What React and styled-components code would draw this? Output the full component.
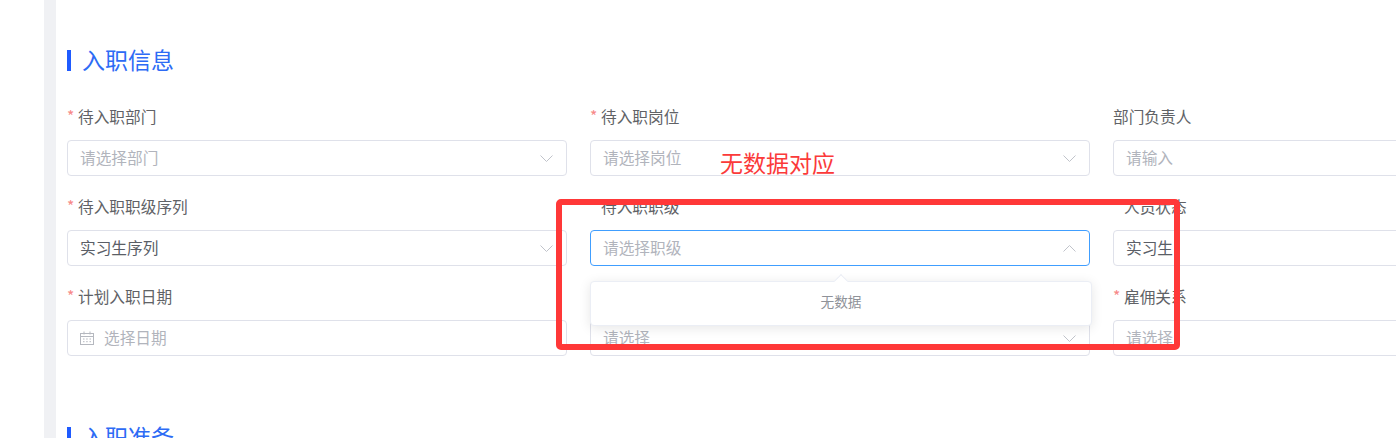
import styled, { createGlobalStyle } from "styled-components";

const GlobalStyle = createGlobalStyle`
  html, body {
    margin: 0;
    padding: 0;
    background: #fff;
    overflow: hidden;
  }
  body {
    font-family: "Noto Sans CJK SC", "Liberation Sans", sans-serif;
  }
`;

const Page = styled.div`
  position: relative;
  display: flex;
  width: 1396px;
  height: 438px;
  overflow: hidden;
`;
const Rail = styled.div`
  width: 44px;
  flex: none;
`;
const Gutter = styled.div`
  width: 12px;
  flex: none;
  background: #f0f1f4;
`;
const Content = styled.main`
  flex: 1;
  min-width: 0;
  padding: 44px 0 0 11px;
`;
const SectionTitle = styled.h2`
  display: flex;
  align-items: center;
  gap: 11px;
  height: 32px;
  margin: 0;
  font-size: 23px;
  font-weight: 400;
  line-height: 32px;
  color: #2d6bf5;
  & > span {
    margin-top: -3px;
  }
  &::before {
    content: "";
    width: 4px;
    height: 21px;
    background: #1f5bff;
  }
`;
const FormGrid = styled.div`
  display: grid;
  grid-template-columns: repeat(3, 500px);
  column-gap: 23px;
  margin-top: 24px;
  margin-bottom: 51px;
`;
const Field = styled.div`
  position: relative;
  height: 90px;
  padding-top: 8px;
  box-sizing: border-box;
`;
const Label = styled.div`
  display: flex;
  align-items: center;
  height: 20px;
  margin-bottom: 12px;
  font-size: 15.7px;
  line-height: 18px;
  color: #606266;
  & > span:last-child {
    margin-top: -3px;
  }
`;
const Star = styled.span`
  width: 11px;
  margin-top: -5px;
  font-size: 15.7px;
  color: #f78989;
`;
const Control = styled.div`
  display: flex;
  align-items: center;
  height: 36px;
  padding: 0 13px 0 12px;
  box-sizing: border-box;
  border: 1px solid ${(p) => (p.$active ? "#409eff" : "#dfe1ea")};
  border-radius: 4px;
  background: #fff;
  font-size: 15.7px;
  color: ${(p) => (p.$filled ? "#5a5e66" : "#b1b4bc")};
`;
const ControlText = styled.span`
  flex: 1;
  min-width: 0;
  margin-top: -2px;
`;
const DateIcon = styled.svg`
  width: 14px;
  height: 14px;
  margin-right: 10px;
  flex: none;
`;
const Chevron = styled.svg`
  width: 13px;
  height: 7px;
  flex: none;
  transform: ${(p) => (p.$up ? "rotate(180deg)" : "none")};
`;
const Dropdown = styled.div`
  position: absolute;
  z-index: 2;
  top: 91px;
  left: 0;
  width: 502px;
  height: 45px;
  padding-bottom: 5px;
  display: flex;
  align-items: center;
  justify-content: center;
  box-sizing: border-box;
  border: 1px solid #ebeef5;
  border-radius: 4px;
  background: #fff;
  box-shadow: 0 2px 12px rgba(0, 0, 0, 0.1);
  font-size: 13.7px;
  color: #8f9299;
  &::before {
    content: "";
    position: absolute;
    top: -6px;
    left: 245px;
    width: 9px;
    height: 9px;
    background: #fff;
    border-top: 1px solid #ebeef5;
    border-left: 1px solid #ebeef5;
    transform: rotate(45deg);
  }
`;
const Annotation = styled.div`
  position: absolute;
  z-index: 3;
  top: 145px;
  left: 720px;
  font-size: 23px;
  line-height: 34px;
  color: #fb3a3a;
`;
const Highlight = styled.div`
  position: absolute;
  z-index: 3;
  top: 199px;
  left: 556px;
  width: 624px;
  height: 151px;
  box-sizing: border-box;
  border: 6px solid #ff3838;
  border-radius: 5px;
`;

const ArrowIcon = ({ up }) => (
  <Chevron $up={up} viewBox="0 0 13 7" fill="none">
    <path d="M0.5 0.5l6 6 6-6" stroke="#c0c3ca" strokeWidth="1" />
  </Chevron>
);

const CalendarIcon = () => (
  <DateIcon viewBox="0 0 14 14" fill="none" stroke="#b5b8bf">
    <rect x="0.5" y="2.5" width="13" height="11" />
    <path d="M0.5 5.5h13M4 0.5v3M10 0.5v3M3 8h1.5M6.2 8h1.5M9.5 8H11M3 10.7h1.5M6.2 10.7h1.5M9.5 10.7H11" />
  </DateIcon>
);

const fields = [
  { label: "待入职部门", required: true, text: "请选择部门", arrow: true },
  { label: "待入职岗位", required: true, text: "请选择岗位", arrow: true },
  { label: "部门负责人", text: "请输入" },
  { label: "待入职职级序列", required: true, text: "实习生序列", filled: true, arrow: true },
  { label: "待入职职级", required: true, text: "请选择职级", arrow: true, open: true },
  { label: "人员状态", required: true, text: "实习生", filled: true, arrow: true },
  { label: "计划入职日期", required: true, text: "选择日期", date: true },
  { label: "工作地点", required: true, text: "请选择", arrow: true },
  { label: "雇佣关系", required: true, text: "请选择", arrow: true },
];

const App = () => (
  <>
    <GlobalStyle />
    <Page>
      <Rail />
      <Gutter />
      <Content>
        <SectionTitle><span>入职信息</span></SectionTitle>
        <FormGrid>
          {fields.map((f) => (
            <Field key={f.label}>
              <Label>
                {f.required && <Star>*</Star>}
                <span>{f.label}</span>
              </Label>
              <Control $filled={f.filled} $active={f.open}>
                {f.date && <CalendarIcon />}
                <ControlText>{f.text}</ControlText>
                {f.arrow && <ArrowIcon up={f.open} />}
              </Control>
              {f.open && <Dropdown>无数据</Dropdown>}
            </Field>
          ))}
        </FormGrid>
        <SectionTitle><span>入职准备</span></SectionTitle>
      </Content>
      <Annotation>无数据对应</Annotation>
      <Highlight />
    </Page>
  </>
);

export default App;
